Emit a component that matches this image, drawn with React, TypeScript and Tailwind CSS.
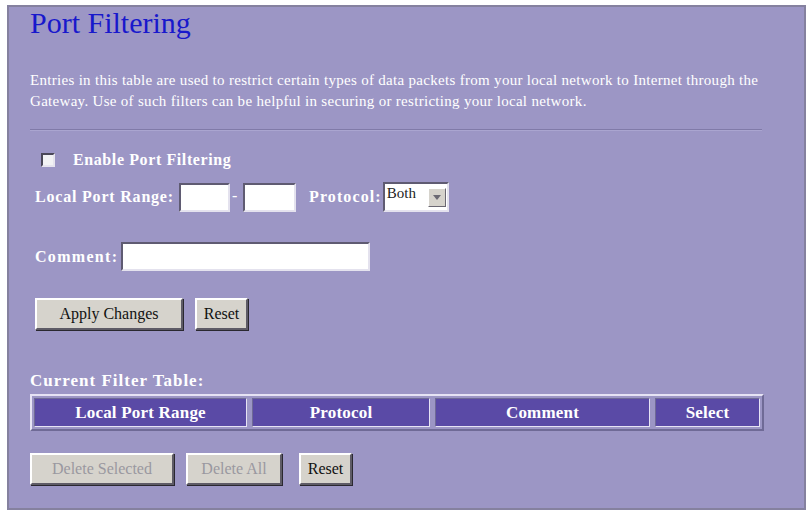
import React from "react";

const serif = { fontFamily: '"Liberation Serif", "Times New Roman", serif' };

function Btn({ children, w, disabled }: { children: React.ReactNode; w: string; disabled?: boolean }) {
  return (
    <div
      className={`${w} h-[32px] flex items-center justify-center bg-[#d6d3cc] border-2 border-t-[#ffffff] border-l-[#ffffff] border-b-[#5e5b66] border-r-[#5e5b66] shadow-[1px_1px_0_#2a2830] text-[16px] ${disabled ? "text-[#9a98a0]" : "text-[#111111]"}`}
    >
      {children}
    </div>
  );
}

function TextBox({ w }: { w: string }) {
  return (
    <div className={`${w} h-[29px] bg-white border-2 border-t-[#5f5b72] border-l-[#5f5b72] border-b-[#e4e2ee] border-r-[#e4e2ee]`} />
  );
}

export default function App() {
  return (
    <div className="w-[810px] h-[514px] bg-white overflow-hidden" style={serif}>
      <div className="ml-[7px] mt-[5px] w-[799px] h-[505px] bg-[#9c96c5] border-2 border-[#85819f] pl-[21px]">
        <div className="text-[30px] leading-[31px] text-[#1818cc]">Port Filtering</div>

        <div className="mt-[32px] text-[15px] leading-[21px] text-white tracking-[0.3px] w-[760px] whitespace-nowrap">
          Entries in this table are used to restrict certain types of data packets from your local network to Internet through the
          <br />
          Gateway. Use of such filters can be helpful in securing or restricting your local network.
        </div>

        <div className="mt-[17px] w-[732px] h-[2px] bg-[#807aa8] border-b border-[#aaa5d0]" />

        <div className="mt-[19px] flex items-center h-[20px] ml-[11px]">
          <div className="w-[14px] h-[14px] bg-[#f2f2f4] border-2 border-t-[#4a4758] border-l-[#4a4758] border-b-[#e6e4ee] border-r-[#e6e4ee]" />
          <span className="ml-[18px] text-[16px] font-bold text-white tracking-[0.6px]">Enable Port Filtering</span>
        </div>

        <div className="mt-[12px] flex items-center ml-[5px] text-[16px] font-bold text-white tracking-[0.8px]">
          <span>Local Port Range:</span>
          <div className="ml-[5px]">
            <TextBox w="w-[51px]" />
          </div>
          <span className="self-end mb-[4px] font-normal ml-[2px]">-</span>
          <div className="ml-[5px]">
            <TextBox w="w-[53px]" />
          </div>
          <span className="ml-[13px] tracking-[1.1px]">Protocol:</span>
          <div className="ml-[1px] w-[66px] h-[30px] bg-white border-2 border-t-[#5f5b72] border-l-[#5f5b72] border-b-[#e4e2ee] border-r-[#e4e2ee] flex items-start">
            <span className="ml-[2px] mt-[1px] text-[15px] leading-[16px] font-normal text-[#222222] tracking-normal">Both</span>
            <div className="ml-auto mr-[1px] mt-[4px] w-[18px] h-[19px] bg-[#d6d3cc] border border-t-[#ffffff] border-l-[#ffffff] border-b-[#6a6772] border-r-[#6a6772] flex items-center justify-center">
              <svg width="8" height="5" viewBox="0 0 8 5">
                <path d="M0 0 H8 L4 5 Z" fill="#6c6a74" />
              </svg>
            </div>
          </div>
        </div>

        <div className="mt-[30px] flex items-center ml-[5px] text-[16px] font-bold text-white tracking-[1.3px]">
          <span>Comment:</span>
          <div className="ml-[3px]">
            <TextBox w="w-[249px]" />
          </div>
        </div>

        <div className="mt-[27px] flex ml-[5px] gap-[12px]">
          <Btn w="w-[148px]">Apply Changes</Btn>
          <Btn w="w-[53px]">Reset</Btn>
        </div>

        <div className="mt-[41px] h-[20px] flex items-center text-[17px] font-bold text-white tracking-[1px]">
          Current Filter Table:
        </div>

        <div className="mt-[3px] w-[734px] h-[37px] border-2 border-t-[#e6e3f4] border-l-[#e6e3f4] border-b-[#6f6a96] border-r-[#6f6a96] p-[2px] flex gap-[5px]">
          {[
            { t: "Local Port Range", w: "w-[213px]" },
            { t: "Protocol", w: "w-[178px]" },
            { t: "Comment", w: "w-[215px]" },
            { t: "Select", w: "w-[105px]" },
          ].map((c) => (
            <div
              key={c.t}
              className={`${c.w} h-full bg-[#5a4aa6] border border-t-[#6f6a96] border-l-[#6f6a96] border-b-[#e6e3f4] border-r-[#e6e3f4] flex items-center justify-center text-[17px] font-bold text-white tracking-[0.2px]`}
            >
              {c.t}
            </div>
          ))}
        </div>

        <div className="mt-[22px] flex">
          <Btn w="w-[144px]" disabled>
            Delete Selected
          </Btn>
          <div className="ml-[12px]">
            <Btn w="w-[96px]" disabled>
              Delete All
            </Btn>
          </div>
          <div className="ml-[17px]">
            <Btn w="w-[53px]">Reset</Btn>
          </div>
        </div>
      </div>
    </div>
  );
}
